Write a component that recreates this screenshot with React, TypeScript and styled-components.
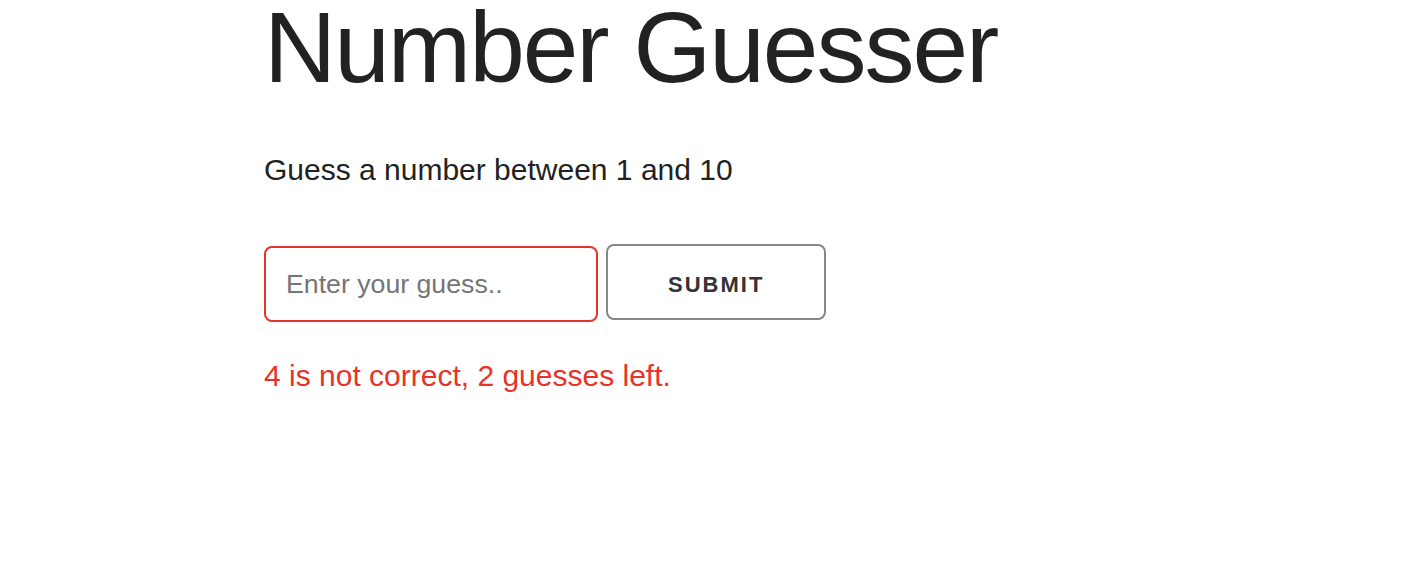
import styled, { createGlobalStyle } from 'styled-components';

const GlobalStyle = createGlobalStyle`
  html, body {
    margin: 0;
    padding: 0;
    background: #fff;
  }
  body {
    font-family: 'Liberation Sans', Arial, sans-serif;
    color: #222;
    overflow: hidden;
  }
`;

function App() {
  return (
    <>
      <GlobalStyle />
      <Container>
        <Title>Number Guesser</Title>
        <Lead>Guess a number between 1 and 10</Lead>
        <Form
          onSubmit={(e) => {
            e.preventDefault();
          }}
        >
          <GuessInput type="number" placeholder="Enter your guess.." invalid />
          <SubmitButton type="submit">Submit</SubmitButton>
        </Form>
        <Message>4 is not correct, 2 guesses left.</Message>
      </Container>
    </>
  );
}

const Container = styled.div`
  width: 892px;
  margin: 0 auto;
`;

const Title = styled.h1`
  margin: 0 0 52px;
  font-size: 100px;
  font-weight: 400;
  line-height: 94px;
  letter-spacing: -2px;
  color: #222;
`;

const Lead = styled.p`
  margin: 0 0 50px;
  font-size: 30px;
  line-height: 48px;
`;

const Form = styled.form`
  display: flex;
  align-items: flex-start;
  gap: 8px;
  margin-bottom: 30px;
`;

const GuessInput = styled.input<{ invalid?: boolean }>`
  box-sizing: border-box;
  width: 334px;
  height: 76px;
  margin-top: 2px;
  padding: 12px 20px;
  border: 2px solid ${(p) => (p.invalid ? '#e5352b' : '#d1d1d1')};
  border-radius: 8px;
  font-family: 'Liberation Sans', Arial, sans-serif;
  font-size: 26.7px;
  color: #222;
  background: #fff;
  outline: none;
  -moz-appearance: textfield;
  &::-webkit-outer-spin-button,
  &::-webkit-inner-spin-button {
    -webkit-appearance: none;
    margin: 0;
  }
  &::placeholder {
    color: #757575;
  }
`;

const SubmitButton = styled.button`
  box-sizing: border-box;
  height: 76px;
  padding: 6px 60px 0;
  border: 2px solid #888;
  border-radius: 8px;
  background: transparent;
  font-family: 'Liberation Sans', Arial, sans-serif;
  font-size: 22px;
  font-weight: 700;
  letter-spacing: 2px;
  text-transform: uppercase;
  color: #333;
  cursor: pointer;
`;

const Message = styled.p`
  margin: 0;
  font-size: 30px;
  line-height: 48px;
  color: #e8332a;
`;

export default App;
